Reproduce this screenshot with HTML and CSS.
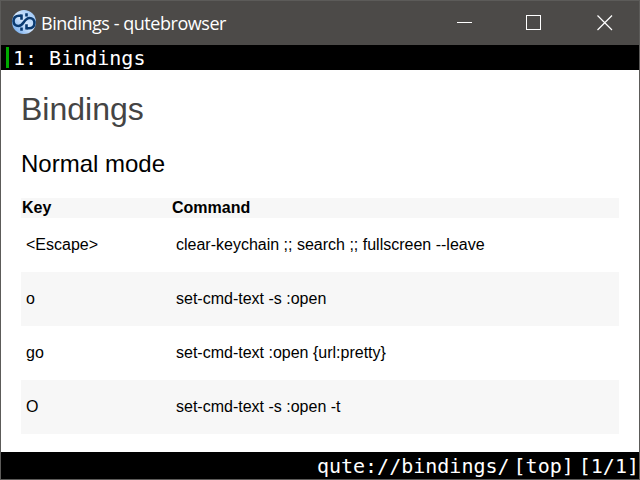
FILE: index.html
```html
<!DOCTYPE html>
<html lang="en">
<head>
<meta charset="utf-8">
<title>Bindings - qutebrowser</title>
<link rel="stylesheet" href="styles.css">
</head>
<body>
<div class="window">
  <header class="titlebar">
    <svg class="logo" viewBox="0 0 24 24">
      <defs><linearGradient id="disc" x1="0" y1="1" x2="1" y2="0"><stop offset="0" stop-color="#5ea0ec"/><stop offset=".5" stop-color="#d4e6fb"/><stop offset="1" stop-color="#8fc0f6"/></linearGradient></defs>
      <circle cx="12" cy="12" r="12" fill="url(#disc)"/>
      <g fill="none" stroke="#0a3a70" stroke-width="2.6">
        <path d="M9.500 5.800H7C3.500 5.800 1.500 8 1.500 11S3.500 16 6.500 16C11.500 16 12 8 17.500 8C20.500 8 22.500 10 22.500 13S20.500 18.200 17 18.200H14.500"/>
        <path d="M9.500 4.500V9.800M14.500 14.200V19.500M14.500 3.200V6.500M9.500 17.500V20.800"/>
      </g>
    </svg>
    <span class="caption">Bindings - qutebrowser</span>
    <svg class="controls" viewBox="0 0 156 16" fill="none" stroke="#fff">
      <path d="M0 7.500h15M69.500.5h14v14h-14z" shape-rendering="crispEdges"/>
      <path d="M140.500.5l14.500 14.500M155 .5l-14.500 14.500" stroke-width="1.200"/>
    </svg>
  </header>
  <div class="tabbar"><span class="indicator"></span><span class="tab">1: Bindings</span></div>
  <main class="page">
    <h1>Bindings</h1>
    <h2>Normal mode</h2>
    <table>
      <thead><tr><th class="key">Key</th><th>Command</th></tr></thead>
      <tbody>
        <tr><td>&lt;Escape&gt;</td><td>clear-keychain ;; search ;; fullscreen --leave</td></tr>
        <tr><td>o</td><td>set-cmd-text -s :open</td></tr>
        <tr><td>go</td><td>set-cmd-text :open {url:pretty}</td></tr>
        <tr><td>O</td><td>set-cmd-text -s :open -t</td></tr>
      </tbody>
    </table>
  </main>
  <footer class="status"><span class="url">qute://bindings/</span><span>[top]</span><span>[1/1]</span></footer>
</div>
</body>
</html>
```
FILE: styles.css
```css
* { box-sizing: border-box; }
body { margin: 0; }
.window {
  width: 640px; height: 480px;
  border: 1px solid #5c5b59;
  display: flex; flex-direction: column;
  overflow: hidden;
  background: #fff;
}
.titlebar {
  height: 44px; flex: none;
  display: flex; align-items: center;
  padding-left: 11px; padding-right: 26px;
  background: #4c4a48; color: #fff;
}
.logo { width: 24px; height: 24px; margin-top: -2px; }
.caption {
  margin-left: 5px;
  font: 18px/24px "Open Sans", sans-serif;
  letter-spacing: -0.46px;
  white-space: nowrap;
}
.controls { width: 156px; height: 16px; margin-left: auto; }
.tabbar {
  height: 25px; flex: none;
  display: flex; align-items: center;
  padding-left: 5px;
  background: #000; color: #fff;
  font: 20px/25px "DejaVu Sans Mono", monospace;
}
.indicator { width: 3px; height: 21px; background: #0a0; }
.tab { margin-left: 4px; padding-top: 1px; white-space: pre; }
.page {
  flex: 1; padding: 19px 20px 0;
  font: 16px/18px "Liberation Sans", Arial, sans-serif;
  color: #000;
}
h1 { margin: 0; font-size: 32px; line-height: 40px; font-weight: 400; color: #444; }
h2 { margin: 20px 0 19px; font-size: 24px; line-height: 30px; font-weight: 400; }
table { width: 598px; table-layout: fixed; border-collapse: collapse; }
th { height: 20px; padding: 1px; text-align: left; background: #f7f7f7; }
.key { width: 150px; }
td { height: 54px; padding: 0 5px; }
tbody tr:nth-child(even) { background: #f7f7f7; }
.status {
  height: 27px; flex: none;
  display: flex; justify-content: flex-end; gap: 5px;
  padding-top: 1px;
  background: #000; color: #fff;
  font: 20px/27px "DejaVu Sans Mono", monospace;
}
.url { margin-right: -1px; }
```
